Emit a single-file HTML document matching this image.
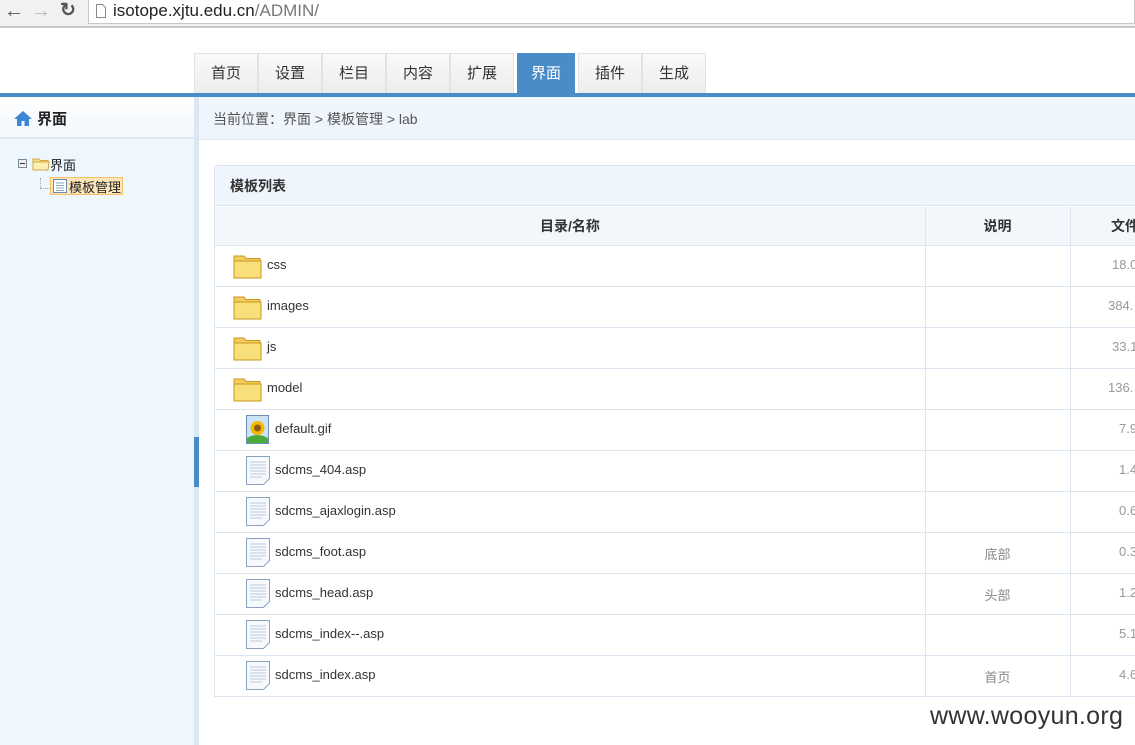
<!DOCTYPE html>
<html><head><meta charset="utf-8"><style>
*{margin:0;padding:0;box-sizing:border-box}
body{width:1135px;height:745px;overflow:hidden;background:#fff;font-family:"Liberation Sans","Noto Sans CJK SC",sans-serif;position:relative;color:#333}
.a{position:absolute}
.tab{position:absolute;top:53px;height:40px;width:64px;border:1px solid #e2e2e2;border-bottom:none;background:linear-gradient(#fafafa,#ececec);font-size:15px;color:#333;text-align:center;line-height:40px}
.tab.on{background:#4a8cc8;color:#fff;border-color:#4a8cc8}
.row{position:absolute;left:214px;width:921px;height:41px;border-bottom:1px solid #dce6f0;font-size:13px;color:#333}
.row .n{position:absolute;top:11px}
.row .d{position:absolute;left:711px;width:145px;text-align:center;top:11px;color:#888;font-size:13px}
.row .s{position:absolute;left:856px;width:65px;height:20px;top:11px;color:#999;font-size:13px;white-space:nowrap;overflow:hidden}
.row .s span{position:absolute;left:42px;top:0}
</style></head><body>
<div class="a" style="left:0;top:0;width:1135px;height:28px;background:#f1f1f1;border-bottom:2px solid #c8c8c8"></div>
<div class="a" style="left:88px;top:0;width:1047px;height:24px;background:#fff;border:1px solid #c8c8c8;border-top:none"></div>
<div class="a" style="left:4px;top:0;font-size:20px;color:#555;line-height:22px">&#8592;</div>
<div class="a" style="left:31px;top:0;font-size:20px;color:#bbb;line-height:22px">&#8594;</div>
<div class="a" style="left:60px;top:0;font-size:19px;color:#555;line-height:22px;font-weight:bold">&#8635;</div>
<svg class="a" style="left:95px;top:3px" width="12" height="16"><path d="M1.5 1.5h6l3 3v10h-9z" fill="#fff" stroke="#888"/></svg>
<div class="a" style="left:113px;top:1px;font-size:17px;color:#222;line-height:20px">isotope.xjtu.edu.cn<span style="color:#777">/ADMIN/</span></div>
<div class="tab" style="left:194px">首页</div>
<div class="tab" style="left:258px">设置</div>
<div class="tab" style="left:322px">栏目</div>
<div class="tab" style="left:386px">内容</div>
<div class="tab" style="left:450px">扩展</div>
<div class="tab on" style="left:517px;width:58px">界面</div>
<div class="tab" style="left:578px">插件</div>
<div class="tab" style="left:642px">生成</div>
<div class="a" style="left:0;top:93px;width:1135px;height:4px;background:#4a8cc8"></div>
<div class="a" style="left:0;top:97px;width:194px;height:648px;background:#eef6fe"></div>
<div class="a" style="left:0;top:97px;width:194px;height:42px;background:linear-gradient(#fff,#f2f7fc);border-bottom:2px solid #dfe9f3"></div>
<svg class="a" style="left:13px;top:110px" width="20" height="17"><path d="M10 1L1 9h3v7h4.5v-5h3v5H16V9h3z" fill="#3b86d6"/></svg>
<div class="a" style="left:37px;top:108px;font-size:15px;font-weight:bold;color:#222">界面</div>
<div class="a" style="left:194px;top:97px;width:5px;height:648px;background:#dbe7f2"></div>
<div class="a" style="left:194px;top:437px;width:5px;height:50px;background:#4a8cc8"></div>
<div class="a" style="left:18px;top:159px;width:9px;height:9px;border:1px solid #7a8a9a;background:#eee"></div>
<div class="a" style="left:20px;top:163px;width:5px;height:1px;background:#333"></div>
<svg class="a" style="left:32px;top:156px" width="18" height="15"><path d="M1 3h6l1.5 1.5H16V14H1z" fill="#f8e08a" stroke="#d2a84a"/><path d="M1 6h16l-1 8H1z" fill="#fcefb0" stroke="#d2a84a"/></svg>
<div class="a" style="left:50px;top:155px;font-size:13px;color:#222">界面</div>
<div class="a" style="left:40px;top:178px;width:1px;height:10px;border-left:1px dotted #aaa"></div>
<div class="a" style="left:40px;top:188px;width:10px;border-top:1px dotted #aaa"></div>
<div class="a" style="left:50px;top:177px;width:73px;height:18px;background:#ffe6b8;border:1px solid #f5c26a"></div>
<svg class="a" style="left:53px;top:179px" width="14" height="14"><rect x=".5" y=".5" width="13" height="13" fill="#fff" stroke="#6a8ab0"/><path d="M3 4h8M3 6.5h8M3 9h8M3 11.5h8" stroke="#8aa4c4"/></svg>
<div class="a" style="left:69px;top:177px;font-size:13px;color:#222">模板管理</div>
<div class="a" style="left:199px;top:97px;width:936px;height:43px;background:#eff5fc;border-bottom:1px solid #dce6f0"></div>
<div class="a" style="left:213px;top:109px;font-size:14px;color:#555">当前位置：界面 &gt; 模板管理 &gt; lab</div>
<div class="a" style="left:214px;top:165px;width:921px;height:532px;border:1px solid #dce6f0;border-right:none;border-radius:3px 0 0 0"></div>
<div class="a" style="left:215px;top:166px;width:920px;height:40px;background:#eef5fd;border-bottom:1px solid #dce6f0"></div>
<div class="a" style="left:230px;top:176px;font-size:14px;font-weight:bold;color:#333">模板列表</div>
<div class="a" style="left:215px;top:207px;width:920px;height:39px;background:#f3f7fc;border-bottom:1px solid #dce6f0"></div>
<div class="a" style="left:215px;top:216px;width:710px;text-align:center;font-size:14px;font-weight:bold;color:#333">目录/名称</div>
<div class="a" style="left:925px;top:216px;width:145px;text-align:center;font-size:14px;font-weight:bold;color:#333">说明</div>
<div class="a" style="left:1111px;top:216px;font-size:14px;font-weight:bold;color:#333;white-space:nowrap">文件</div>
<div class="a" style="left:925px;top:207px;width:1px;height:490px;background:#dce6f0"></div>
<div class="a" style="left:1070px;top:207px;width:1px;height:490px;background:#dce6f0"></div>

<div class="row" style="top:246px"><svg class="a" style="left:19px;top:7px" width="29" height="26"><path d="M1 3h10l2 2.5h14V25H1z" fill="#f1cd5e" stroke="#c9961e"/><path d="M1 8h27v17H1z" fill="#f9df7a" stroke="#c9961e"/></svg><span class="n" style="left:53px">css</span><div class="s"><span>18.0</span></div></div>
<div class="row" style="top:287px"><svg class="a" style="left:19px;top:7px" width="29" height="26"><path d="M1 3h10l2 2.5h14V25H1z" fill="#f1cd5e" stroke="#c9961e"/><path d="M1 8h27v17H1z" fill="#f9df7a" stroke="#c9961e"/></svg><span class="n" style="left:53px">images</span><div class="s"><span style="left:38px">384.</span></div></div>
<div class="row" style="top:328px"><svg class="a" style="left:19px;top:7px" width="29" height="26"><path d="M1 3h10l2 2.5h14V25H1z" fill="#f1cd5e" stroke="#c9961e"/><path d="M1 8h27v17H1z" fill="#f9df7a" stroke="#c9961e"/></svg><span class="n" style="left:53px">js</span><div class="s"><span>33.1</span></div></div>
<div class="row" style="top:369px"><svg class="a" style="left:19px;top:7px" width="29" height="26"><path d="M1 3h10l2 2.5h14V25H1z" fill="#f1cd5e" stroke="#c9961e"/><path d="M1 8h27v17H1z" fill="#f9df7a" stroke="#c9961e"/></svg><span class="n" style="left:53px">model</span><div class="s"><span style="left:38px">136.</span></div></div>
<div class="row" style="top:410px"><svg class="a" style="left:32px;top:5px" width="24" height="30"><path d="M.5 .5h22v28H.5z" fill="#cfe3f7" stroke="#6b8fb8"/><circle cx="11.5" cy="13" r="7" fill="#f5b800"/><circle cx="11.5" cy="13" r="3.5" fill="#8a5a10"/><path d="M1 23q10-6 21 0v5H1z" fill="#4caa3a"/></svg><span class="n" style="left:61px">default.gif</span><div class="s"><span style="left:49px">7.9</span></div></div>
<div class="row" style="top:451px"><svg class="a" style="left:32px;top:5px" width="24" height="30"><path d="M.5 .5h23v22l-6 6H.5z" fill="#f7fafd" stroke="#8aa2c0"/><path d="M4 6h16M4 9h16M4 12h16M4 15h16M4 18h16M4 21h12" stroke="#b8c8dc"/></svg><span class="n" style="left:61px">sdcms_404.asp</span><div class="s"><span style="left:49px">1.4</span></div></div>
<div class="row" style="top:492px"><svg class="a" style="left:32px;top:5px" width="24" height="30"><path d="M.5 .5h23v22l-6 6H.5z" fill="#f7fafd" stroke="#8aa2c0"/><path d="M4 6h16M4 9h16M4 12h16M4 15h16M4 18h16M4 21h12" stroke="#b8c8dc"/></svg><span class="n" style="left:61px">sdcms_ajaxlogin.asp</span><div class="s"><span style="left:49px">0.6</span></div></div>
<div class="row" style="top:533px"><svg class="a" style="left:32px;top:5px" width="24" height="30"><path d="M.5 .5h23v22l-6 6H.5z" fill="#f7fafd" stroke="#8aa2c0"/><path d="M4 6h16M4 9h16M4 12h16M4 15h16M4 18h16M4 21h12" stroke="#b8c8dc"/></svg><span class="n" style="left:61px">sdcms_foot.asp</span><div class="d">底部</div><div class="s"><span style="left:49px">0.3</span></div></div>
<div class="row" style="top:574px"><svg class="a" style="left:32px;top:5px" width="24" height="30"><path d="M.5 .5h23v22l-6 6H.5z" fill="#f7fafd" stroke="#8aa2c0"/><path d="M4 6h16M4 9h16M4 12h16M4 15h16M4 18h16M4 21h12" stroke="#b8c8dc"/></svg><span class="n" style="left:61px">sdcms_head.asp</span><div class="d">头部</div><div class="s"><span style="left:49px">1.2</span></div></div>
<div class="row" style="top:615px"><svg class="a" style="left:32px;top:5px" width="24" height="30"><path d="M.5 .5h23v22l-6 6H.5z" fill="#f7fafd" stroke="#8aa2c0"/><path d="M4 6h16M4 9h16M4 12h16M4 15h16M4 18h16M4 21h12" stroke="#b8c8dc"/></svg><span class="n" style="left:61px">sdcms_index--.asp</span><div class="s"><span style="left:49px">5.1</span></div></div>
<div class="row" style="top:656px"><svg class="a" style="left:32px;top:5px" width="24" height="30"><path d="M.5 .5h23v22l-6 6H.5z" fill="#f7fafd" stroke="#8aa2c0"/><path d="M4 6h16M4 9h16M4 12h16M4 15h16M4 18h16M4 21h12" stroke="#b8c8dc"/></svg><span class="n" style="left:61px">sdcms_index.asp</span><div class="d">首页</div><div class="s"><span style="left:49px">4.6</span></div></div>

<div class="a" style="left:930px;top:702px;font-size:25px;color:#333;letter-spacing:.3px">www.wooyun.org</div>
</body></html>
